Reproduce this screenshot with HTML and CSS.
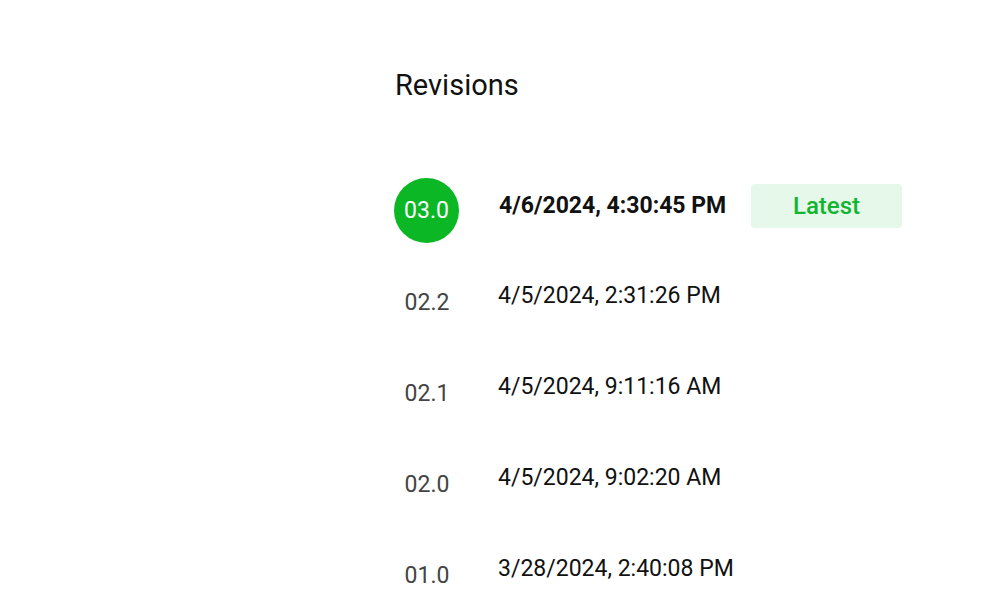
FILE: index.html
```html
<!DOCTYPE html>
<html>
<head>
<meta charset="utf-8">
<link rel="stylesheet" href="styles.css">
</head>
<body>
<div class="page">
  <h1 class="title">Revisions</h1>
  <ul class="list">
    <li class="row">
      <div class="ver current">03.0</div>
      <div class="date bold">4/6/2024, 4:30:45 PM</div>
      <div class="badge">Latest</div>
    </li>
    <li class="row">
      <div class="ver">02.2</div>
      <div class="date">4/5/2024, 2:31:26 PM</div>
    </li>
    <li class="row">
      <div class="ver">02.1</div>
      <div class="date">4/5/2024, 9:11:16 AM</div>
    </li>
    <li class="row">
      <div class="ver">02.0</div>
      <div class="date">4/5/2024, 9:02:20 AM</div>
    </li>
    <li class="row">
      <div class="ver">01.0</div>
      <div class="date">3/28/2024, 2:40:08 PM</div>
    </li>
  </ul>
</div>
</body>
</html>
```
FILE: styles.css
```css
html, body {
  margin: 0;
  padding: 0;
  background: #fff;
  font-family: Roboto, "Liberation Sans", sans-serif;
}
.page {
  padding: 66px 0 0 395px;
}
.title {
  margin: 0;
  font-size: 29px;
  font-weight: 400;
  line-height: 38px;
  color: #111;
}
.list {
  list-style: none;
  margin: 75px 0 0;
  padding: 0;
  display: flex;
  flex-direction: column;
  gap: 27px;
}
.row {
  display: flex;
  align-items: flex-start;
  height: 64px;
}
.ver {
  width: 64px;
  height: 64px;
  display: flex;
  align-items: center;
  justify-content: center;
  font-size: 23px;
  color: #444;
  padding-top: 1px;
  box-sizing: border-box;
  flex-shrink: 0;
}
.ver.current {
  width: 65px;
  height: 65px;
  padding-top: 0;
  margin-left: -1px;
  margin-top: -1px;
  border-radius: 50%;
  background: #0bb724;
  color: #fff;
  font-size: 23px;
}
.date {
  margin-left: 39px;
  margin-top: 12px;
  font-size: 23px;
  line-height: 28px;
  color: #111;
  width: 252px;
  white-space: nowrap;
}
.ver.current + .date {
  margin-left: 40px;
  margin-top: 13px;
}
.date.bold {
  font-weight: 700;
}
.badge {
  margin-top: 5px;
  width: 151px;
  height: 44px;
  border-radius: 4px;
  background: #e6f8ea;
  color: #12b52f;
  font-size: 24px;
  font-weight: 500;
  display: flex;
  align-items: center;
  justify-content: center;
}
```
